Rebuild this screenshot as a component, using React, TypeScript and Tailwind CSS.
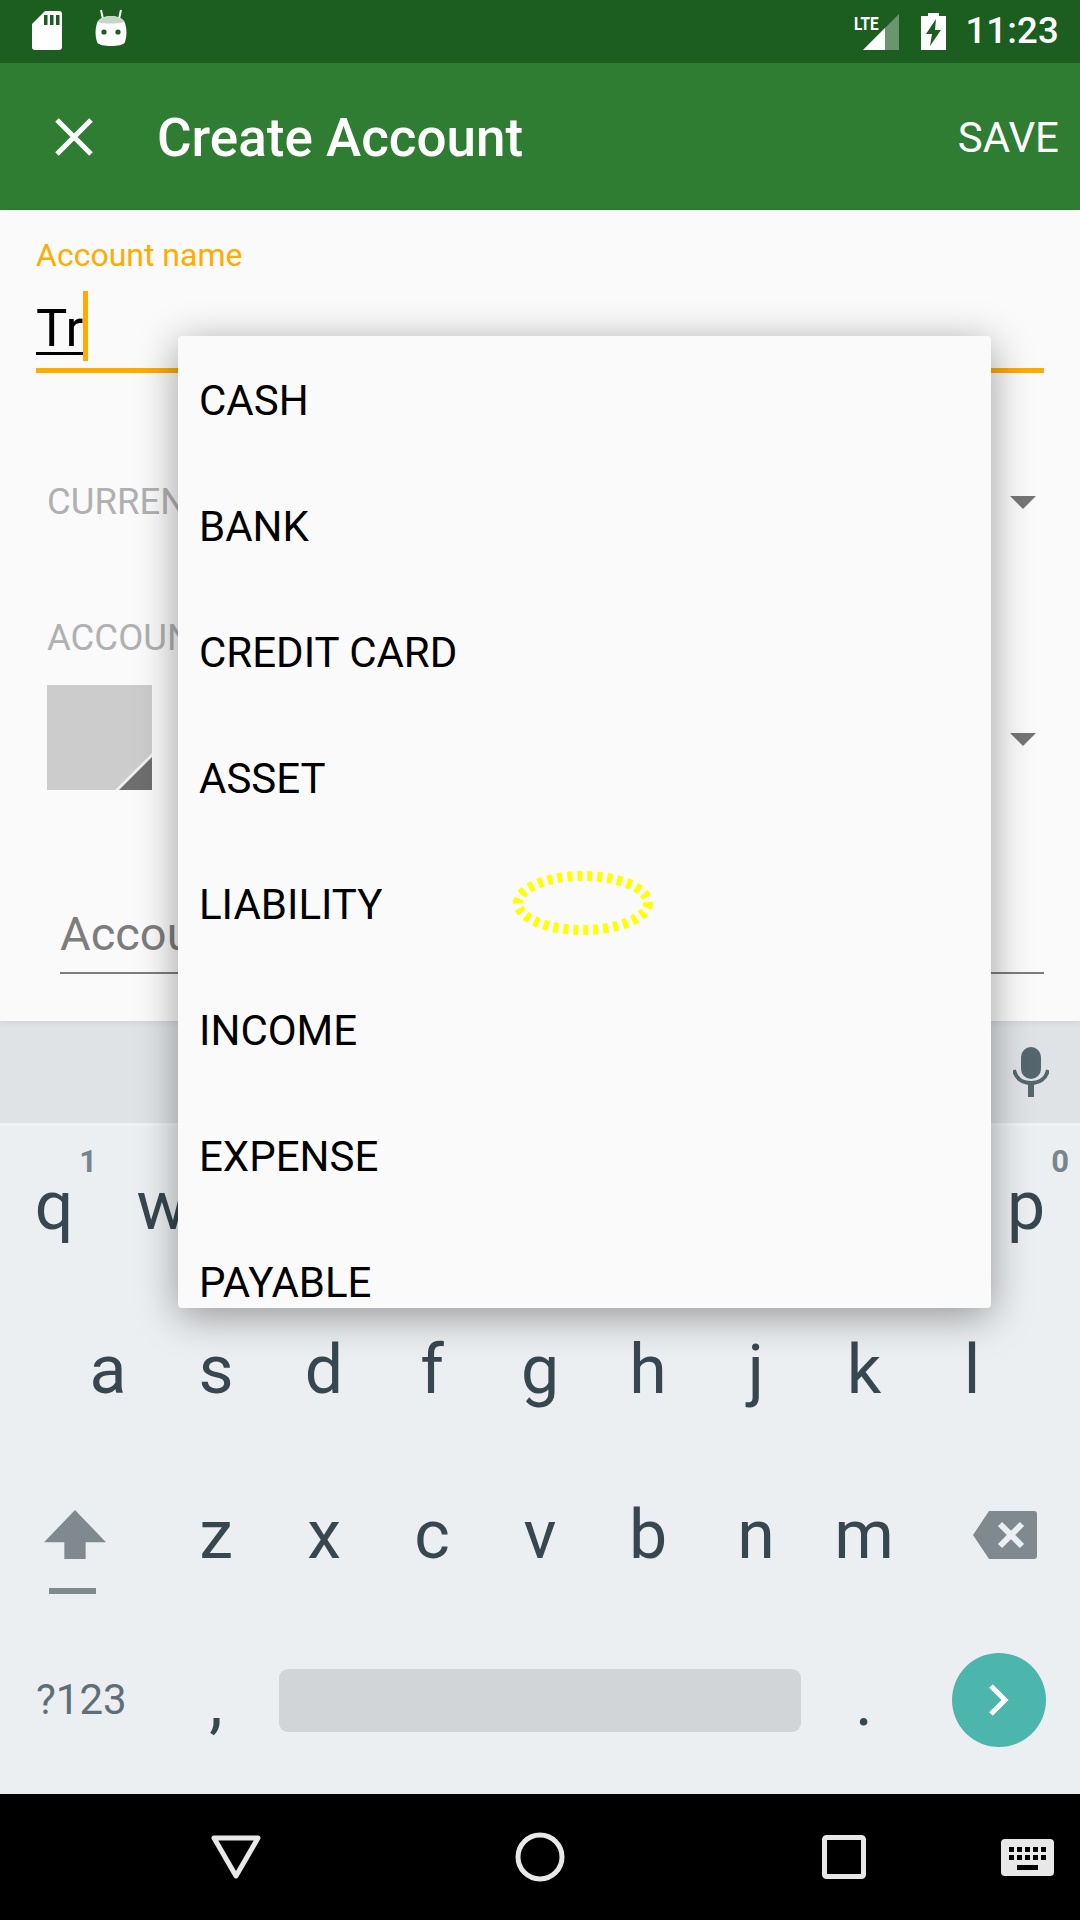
import React from 'react';

const accountTypes = ['CASH', 'BANK', 'CREDIT CARD', 'ASSET', 'LIABILITY', 'INCOME', 'EXPENSE', 'PAYABLE'];

const topRow = [
  ['q', '1'], ['w', '2'], ['e', '3'], ['r', '4'], ['t', '5'],
  ['y', '6'], ['u', '7'], ['i', '8'], ['o', '9'], ['p', '0'],
];

function Key({ label, hint }: { label: string; hint?: string }) {
  return (
    <div className="relative w-[108px] h-full flex items-center justify-center text-[68px] leading-none text-[#37474f]">
      <span className="relative -top-[1px]">{label}</span>
      {hint && (
        <span className="absolute right-[11px] top-[20px] text-[31px] leading-none font-bold text-[#78858c]">{hint}</span>
      )}
    </div>
  );
}

function StatusBar() {
  return (
    <div className="h-[63px] bg-[#1b5e20] flex items-center pl-[32px] pr-[21px] text-white">
      <svg width="30" height="39" viewBox="0 0 30 39" className="mr-[33px] -mt-[2px]">
        <path fill="#fff" d="M13 0h14a3 3 0 0 1 3 3v33a3 3 0 0 1-3 3H3a3 3 0 0 1-3-3V13z" />
        <path fill="#1b5e20" d="M12 4h3.5v10H12zM18 4h3.5v10H18zM24 4h3.5v10H24z" />
      </svg>
      <svg width="32" height="38" viewBox="0 0 32 38" className="-mt-[8px]">
        <path stroke="#fff" strokeWidth="2" d="M8 10 6 1M24 10l2-9" />
        <path fill="#fff" d="M2 14c2-5 8-7 14-7s12 2 14 7c2 6 2 13 0 19-1 3-8 4-14 4S3 36 2 33C0 27 0 20 2 14z" />
        <path fill="#c5d6c6" d="M3 13c2-4 8-6 13-6s11 2 13 6c-4 2-22 2-26 0z" />
        <circle cx="9" cy="23" r="2.6" fill="#1b5e20" />
        <circle cx="23" cy="23" r="2.6" fill="#1b5e20" />
      </svg>
      <div className="ml-auto flex items-center">
        <div className="relative w-[45px] h-[36px] mr-[22px] flex justify-end">
          <svg width="36" height="36" viewBox="0 0 36 36">
            <path fill="#fff" fillOpacity="0.35" d="M36 0v36H0z" />
            <path fill="#fff" d="M0 36 22 14v22z" />
          </svg>
          <span className="absolute left-0 top-[0px] text-[18px] leading-[20px] font-bold text-white scale-x-[0.85] origin-left">LTE</span>
        </div>
        <svg width="25" height="37" viewBox="0 0 25 37" className="mr-[19px]">
          <path fill="#fff" d="M7 0h11v3h7v34H0V3h7z" />
          <path fill="#1b5e20" d="M15 6 5 21h6l-2 12 11-16h-6z" />
        </svg>
        <span className="text-[36.5px] leading-none font-medium tracking-[0.2px]">11:23</span>
      </div>
    </div>
  );
}

function AppBar() {
  return (
    <div className="h-[147px] bg-[#2e7d32] flex items-center text-white">
      <svg width="38" height="38" viewBox="0 0 38 38" className="ml-[55px] mr-[64px]">
        <path stroke="#fff" strokeWidth="5" d="M2 2l34 34M36 2 2 36" />
      </svg>
      <span className="text-[53px] leading-none font-medium relative top-[2px]">Create Account</span>
      <span className="ml-auto mr-[21px] text-[42px] leading-none relative top-[1px]">SAVE</span>
    </div>
  );
}

function Caret() {
  return <div className="w-0 h-0 border-l-[13px] border-r-[13px] border-t-[13px] border-l-transparent border-r-transparent border-t-[#757575]" />;
}

function Form() {
  return (
    <div className="h-[811px] bg-[#fafafa] relative shadow-[0_2px_6px_rgba(0,0,0,0.06)] z-10">
      <div className="pl-[36px] pr-[36px] pt-[27px]">
        <div className="text-[32px] leading-[37px] text-[#ffab00]">Account name</div>
        <div className="h-[77px] mt-[18px] flex items-start">
          <span className="text-[52.5px] leading-[73px] text-black border-b-[3px] border-black h-[63px] w-[47px]">Tr</span>
          <div className="w-[5px] h-[70px] bg-[#ffab00] -mt-[1px]" />
        </div>
        <div className="h-[5px] bg-[#ffab00] -mt-[1px]" />
      </div>

      <div className="pl-[47px] pr-[44px] mt-[109px] flex items-center justify-between h-[40px]">
        <span className="text-[36.5px] leading-none text-[#b0b0b0]">CURRENCY</span>
        <Caret />
      </div>

      <div className="pl-[47px] mt-[96px] text-[36.5px] leading-[40px] text-[#b0b0b0]">ACCOUNT COLOR &amp; TYPE</div>
      <div className="pl-[47px] pr-[44px] mt-[27px] flex items-center justify-between">
        <div className="relative w-[105px] h-[105px] bg-[#cccccc] overflow-hidden">
          <svg width="105" height="105" viewBox="0 0 105 105" className="absolute left-0 top-0">
            <path fill="#f0f0f0" d="M68 105 105 68v6l-31 31z" />
            <path fill="#6e6e6e" d="M72 105 105 72v33z" />
          </svg>
        </div>
        <div className="relative top-[2px]">
          <Caret />
        </div>
      </div>

      <div className="ml-[60px] mr-[36px] mt-[116px] border-b-[2px] border-[#7d7d7d] h-[68px]">
        <span className="text-[47px] leading-[56px] text-[#7d7d7d] whitespace-nowrap">Account description</span>
      </div>
    </div>
  );
}

function Keyboard() {
  return (
    <div className="h-[773px] bg-[#eceff1] flex flex-col">
      <div className="h-[105px] bg-[#dfe3e6] border-b-[3px] border-[#f0f3f5] flex items-center justify-end pr-[31px]">
        <svg width="36" height="50" viewBox="0 0 36 50">
          <rect x="8" y="0" width="20" height="32" rx="10" fill="#56666e" />
          <path fill="none" stroke="#56666e" strokeWidth="4" d="M1 23c2 9 9 13 17 13s15-4 17-13" />
          <path fill="#56666e" d="M15 35h6v15h-6z" />
        </svg>
      </div>

      <div className="h-[162px] flex">
        {topRow.map(([label, hint]) => (
          <Key key={label} label={label} hint={hint} />
        ))}
      </div>

      <div className="h-[165px] flex pl-[54px]">
        {'asdfghjkl'.split('').map((c) => (
          <Key key={c} label={c} />
        ))}
      </div>

      <div className="h-[165px] flex items-center">
        <div className="w-[162px] h-full flex flex-col items-center pt-[57px] pr-[12px]">
          <svg width="62" height="49" viewBox="0 0 64 50" preserveAspectRatio="none">
            <path fill="#80898d" d="M32 0 64 33H43v17H21V33H0z" />
          </svg>
          <div className="w-[47px] h-[6px] bg-[#80898d] mt-[29px] -ml-[5px] shrink-0" />
        </div>
        {'zxcvbnm'.split('').map((c) => (
          <Key key={c} label={c} />
        ))}
        <div className="flex-1 flex justify-center pl-[11px] -mt-[2px]">
          <svg width="64" height="48" viewBox="0 0 64 48">
            <path fill="#80898d" d="M16 0h45a3 3 0 0 1 3 3v42a3 3 0 0 1-3 3H16L0 24z" />
            <path stroke="#eceff1" strokeWidth="6" d="m27 13 22 22M49 13 27 35" />
          </svg>
        </div>
      </div>

      <div className="flex-1 flex items-center">
        <span className="w-[162px] pl-[36px] text-[42px] leading-none text-[#5f6f77] -mt-[12px]">?123</span>
        <div className="w-[108px] h-full flex justify-center text-[68px] leading-none text-[#37474f] pt-[50px]">,</div>
        <div className="w-[522px] h-[63px] ml-[9px] rounded-[9px] bg-[#d1d5d8] -mt-[12px]" />
        <div className="w-[108px] ml-[9px] h-full flex justify-center text-[68px] leading-none text-[#37474f] pt-[50px]">.</div>
        <div className="w-[94px] h-[94px] ml-[34px] rounded-full bg-[#4db6ac] flex items-center justify-center -mt-[12px]">
          <svg width="20" height="32" viewBox="0 0 20 32">
            <path fill="none" stroke="#fff" strokeWidth="5" d="m2 2 14 14L2 30" />
          </svg>
        </div>
      </div>
    </div>
  );
}

function NavBar() {
  return (
    <div className="h-[126px] bg-black relative flex items-center">
      <svg width="50" height="44" viewBox="0 0 50 44" className="ml-[211px]">
        <path fill="none" stroke="#e8e8e8" strokeWidth="5" strokeLinejoin="round" d="M3 3h44L25 41z" />
      </svg>
      <svg width="50" height="50" viewBox="0 0 50 50" className="ml-[254px]">
        <circle cx="25" cy="25" r="22" fill="none" stroke="#e8e8e8" strokeWidth="5" />
      </svg>
      <svg width="44" height="44" viewBox="0 0 44 44" className="ml-[257px]">
        <rect x="2.5" y="2.5" width="39" height="39" rx="2" fill="none" stroke="#e8e8e8" strokeWidth="5" />
      </svg>
      <svg width="53" height="37" viewBox="0 0 53 37" className="ml-[135px]">
        <rect width="53" height="37" rx="4" fill="#e8e8e8" />
        <path fill="#000" d="M8 8h5v5H8zM16 8h5v5h-5zM24 8h5v5h-5zM32 8h5v5h-5zM40 8h5v5h-5zM8 16h5v5H8zM16 16h5v5h-5zM24 16h5v5h-5zM32 16h5v5h-5zM40 16h5v5h-5zM16 26h21v5H16z" />
      </svg>
    </div>
  );
}

export default function App() {
  return (
    <div className="relative w-[1080px] h-[1920px] overflow-hidden font-['Roboto',sans-serif]">
      <StatusBar />
      <AppBar />
      <Form />
      <Keyboard />
      <NavBar />

      {/* spinner dropdown */}
      <div className="absolute z-20 left-[178px] top-[336px] w-[813px] h-[972px] bg-[#fafafa] rounded-[4px] overflow-hidden shadow-[0_8px_40px_rgba(0,0,0,0.38)]">
        {accountTypes.map((t) => (
          <div key={t} className="h-[126px] flex items-center pl-[21px] pt-[4px] text-[42px] leading-none text-black whitespace-nowrap">
            {t}
          </div>
        ))}
      </div>

      {/* touch marker */}
      <svg width="142" height="68" viewBox="0 0 142 68" className="absolute z-30 left-[512px] top-[869px]">
        <ellipse cx="71" cy="34" rx="65" ry="27" fill="none" stroke="#ffff00" strokeWidth="10" strokeDasharray="5 5" />
      </svg>
    </div>
  );
}
